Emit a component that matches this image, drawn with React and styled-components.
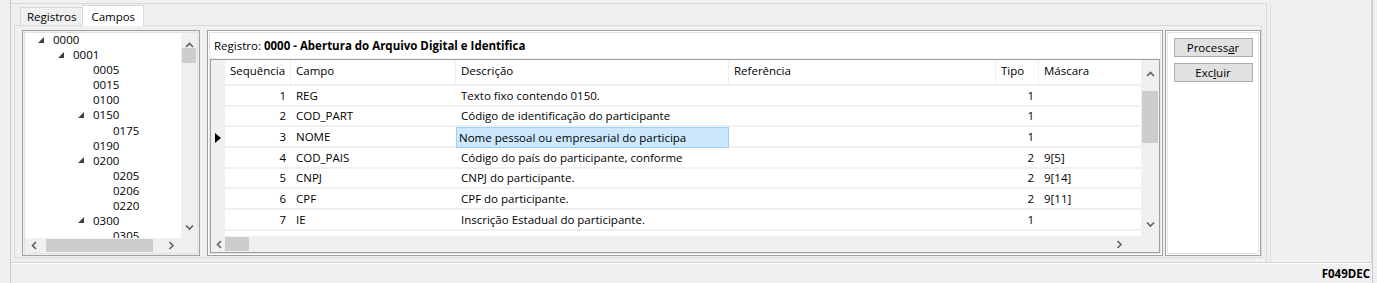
import React from 'react'
import styled, { createGlobalStyle } from 'styled-components'

const Global = createGlobalStyle`
    html, body { margin: 0; padding: 0; background: #f0f0f0; }
    body { font-family: "Open Sans", "Noto Sans", sans-serif; font-size: 11px; color: #000; }
`

const Window = styled.div`
    width: 1377px;
    height: 283px;
    display: flex;
    background: #f0f0f0;
    overflow: hidden;
`
const Gutter = styled.div`
    width: 10px;
    border-right: 1px solid #c8c8c8;
`
const Frame = styled.div`
    width: 1361px;
    display: flex;
    flex-direction: column;
    border-right: 1px solid #c8c8c8;
`
const Top = styled.div`
    height: 262px;
    display: flex;
    border-bottom: 1px solid #d4d4d4;
`
const Main = styled.div`
    width: 1252px;
    display: flex;
    flex-direction: column;
    border-top: 1px solid #dadada;
    margin-top: 3px;
    padding: 1px 0 0 3px;
    border-right: 1px solid #d9d9d9;
`
const Side = styled.div`
    flex: 1;
    margin-left: 3px;
    border-left: 1px solid #e3e3e3;
    border-right: 1px solid #d9d9d9;
`
const TabRow = styled.div`
    display: flex;
    align-items: flex-end;
    height: 20px;
    padding-left: 6px;
`
const Tab = styled.div`
    height: ${p => p.$active ? '20px' : '17px'};
    padding: 0 ${p => p.$active ? '8px' : '6px'};
    margin-left: ${p => p.$active ? '-1px' : '0'};
    display: flex;
    align-items: center;
    border: 1px solid #d9d9d9;
    border-bottom: none;
    background: ${p => p.$active ? '#fff' : '#f0f0f0'};
    font-size: 11.5px;
    position: relative;
    z-index: ${p => p.$active ? 1 : 0};
    margin-bottom: ${p => p.$active ? '-1px' : '0'};
`
const TabBody = styled.div`
    width: 1248px;
    height: 233px;
    border: 1px solid #d9d9d9;
    background: #f0f0f0;
    box-sizing: border-box;
    display: flex;
    padding: 4px 0 0 7px;
`
const TreeBox = styled.div`
    width: 178px;
    height: 226px;
    box-sizing: border-box;
    border: 1px solid #a0a0a0;
    outline: 1px solid #e3e3e3;
    outline-offset: -3px;
    padding: 2px;
    display: grid;
    grid-template-columns: 1fr 16px;
    grid-template-rows: 1fr 15px;
    background: #f0f0f0;
`
const TreeList = styled.div`
    background: #fff;
    overflow: hidden;
    padding-top: 0;
`
const TreeItem = styled.div`
    height: 15.08px;
    line-height: 15px;
    display: flex;
    align-items: center;
    padding-left: ${p => 13 + p.$level * 20}px;
    font-size: 11.5px;
    white-space: nowrap;
    &:first-child { margin-top: -1px; }
`
const Expander = styled.span`
    width: 14px;
    display: inline-flex;
    align-items: center;
    margin-right: 1px;
`
const VBar = styled.div`
    background: #f0f0f0;
    display: flex;
    flex-direction: column;
    align-items: center;
    justify-content: space-between;
    position: relative;
`
const HBar = styled.div`
    background: #f0f0f0;
    display: flex;
    align-items: center;
    justify-content: space-between;
    position: relative;
    padding: 0 6px;
`
const Thumb = styled.div`
    position: absolute;
    background: #cdcdcd;
`
const Corner = styled.div`
    background: #f0f0f0;
`
const GridPanel = styled.div`
    width: 956px;
    height: 226px;
    margin-left: 7px;
    box-sizing: border-box;
    border: 1px solid #a0a0a0;
    outline: 1px solid #e3e3e3;
    outline-offset: -3px;
    padding: 2px;
    display: flex;
    flex-direction: column;
    background: #fff;
`
const Title = styled.div`
    height: 25px;
    display: flex;
    align-items: center;
    padding-left: 4px;
    font-size: 11.5px;
    border-bottom: 1px solid #f0f0f0;
    b { font-weight: 700; margin-left: 3px; }
`
const Grid = styled.div`
    flex: 1;
    border: 1px solid #a0a0a0;
    display: grid;
    grid-template-columns: 1fr 18px;
    grid-template-rows: 1fr 16px;
    overflow: hidden;
`
const Table = styled.div`
    display: flex;
    flex-direction: column;
    overflow: hidden;
    background: #fff;
`
const cols = '14px 66px 165px 273px 267px 43px 105px'
const HeadRow = styled.div`
    display: grid;
    grid-template-columns: ${cols};
    height: 26px;
    flex-shrink: 0;
`
const HeadCell = styled.div`
    display: flex;
    align-items: center;
    padding: 0 0 4px 5px;
    border-right: 1px solid #f0f0f0;
    border-bottom: 2px solid #f0f0f0;
    font-size: 11.5px;
    background: ${p => p.$gray ? '#f0f0f0' : '#fff'};
`
const Row = styled.div`
    display: grid;
    grid-template-columns: ${cols};
    height: 20.67px;
    flex-shrink: 0;
`
const Cell = styled.div`
    display: flex;
    align-items: center;
    box-sizing: border-box;
    padding: 0 5px;
    font-size: 11.5px;
    white-space: nowrap;
    overflow: hidden;
    border-bottom: 2px solid #f0f0f0;
    justify-content: ${p => p.$right ? 'flex-end' : 'flex-start'};
    background: ${p => p.$sel ? '#cce8ff' : '#fff'};
    ${p => p.$sel && 'border: 1px solid #99d1ff; padding-left: 2px;'}
`
const Indicator = styled.div`
    background: #f0f0f0;
    display: flex;
    align-items: center;
    justify-content: center;
`
const Filler = styled.div`
    flex: 1;
    display: grid;
    grid-template-columns: 14px 1fr;
    > div:first-child { background: #f0f0f0; }
`
const ButtonPanel = styled.div`
    width: 96px;
    height: 226px;
    margin-left: 2px;
    box-sizing: border-box;
    border: 1px solid #a0a0a0;
    outline: 1px solid #e3e3e3;
    outline-offset: -3px;
    background: #fff;
    display: flex;
    flex-direction: column;
    align-items: center;
    gap: 6px;
    padding-top: 7px;
`
const Button = styled.button`
    width: 79px;
    height: 19px;
    border: 1px solid #adadad;
    background: #e1e1e1;
    font-family: inherit;
    font-size: 11.5px;
    padding: 0;
    color: #000;
    u { text-decoration: underline; }
`
const StatusBar = styled.div`
    flex: 1;
    display: flex;
    align-items: center;
    justify-content: flex-end;
    padding-right: 2px;
    font-weight: 700;
    font-size: 11.5px;
    border-top: 1px solid #fff;
`

const Chevron = ({ dir }) => {
    const pts = {
        up: '1,5 4.5,1.5 8,5',
        down: '1,1.5 4.5,5 8,1.5',
        left: '5,1 1.5,4.5 5,8',
        right: '1.5,1 5,4.5 1.5,8',
    }[dir]
    const vertical = dir === 'up' || dir === 'down'
    return (
        <svg width={vertical ? 9 : 7} height={vertical ? 7 : 9} viewBox={vertical ? '0 0 9 7' : '0 0 7 9'}>
            <polyline points={pts} fill="none" stroke="#606060" strokeWidth="1.6" />
        </svg>
    )
}

const ExpandIcon = () => (
    <svg width="6" height="6" viewBox="0 0 6 6">
        <polygon points="6,0 6,6 0,6" fill="#404040" />
    </svg>
)

const tree = [
    { id: '0000', level: 0, open: true },
    { id: '0001', level: 1, open: true },
    { id: '0005', level: 2 },
    { id: '0015', level: 2 },
    { id: '0100', level: 2 },
    { id: '0150', level: 2, open: true },
    { id: '0175', level: 3 },
    { id: '0190', level: 2 },
    { id: '0200', level: 2, open: true },
    { id: '0205', level: 3 },
    { id: '0206', level: 3 },
    { id: '0220', level: 3 },
    { id: '0300', level: 2, open: true },
    { id: '0305', level: 3 },
]

const rows = [
    ['1', 'REG', 'Texto fixo contendo 0150.', '', '1', ''],
    ['2', 'COD_PART', 'Código de identificação do participante', '', '1', ''],
    ['3', 'NOME', 'Nome pessoal ou empresarial do participa', '', '1', ''],
    ['4', 'COD_PAIS', 'Código do país do participante, conforme', '', '2', '9[5]'],
    ['5', 'CNPJ', 'CNPJ do participante.', '', '2', '9[14]'],
    ['6', 'CPF', 'CPF do participante.', '', '2', '9[11]'],
    ['7', 'IE', 'Inscrição Estadual do participante.', '', '1', ''],
]

const App = () => {
    return (
        <Window>
            <Global />
            <Gutter />
            <Frame>
                <Top>
                    <Main>
                        <TabRow>
                            <Tab>Registros</Tab>
                            <Tab $active>Campos</Tab>
                        </TabRow>
                        <TabBody>
                            <TreeBox>
                                <TreeList>
                                    {tree.map(t => (
                                        <TreeItem key={t.id} $level={t.level}>
                                            <Expander>{t.open && <ExpandIcon />}</Expander>
                                            {t.id}
                                        </TreeItem>
                                    ))}
                                </TreeList>
                                <VBar>
                                    <span style={{ marginTop: 4 }}><Chevron dir="up" /></span>
                                    <Thumb style={{ left: 1, right: 1, top: 15, height: 15 }} />
                                    <span style={{ marginBottom: 4 }}><Chevron dir="down" /></span>
                                </VBar>
                                <HBar>
                                    <Chevron dir="left" />
                                    <Thumb style={{ left: 21, width: 107, top: 1, bottom: 1 }} />
                                    <Chevron dir="right" />
                                </HBar>
                                <Corner />
                            </TreeBox>
                            <GridPanel>
                                <Title>Registro: <b>0000 - Abertura do Arquivo Digital e Identifica</b></Title>
                                <Grid>
                                    <Table>
                                        <HeadRow>
                                            <HeadCell $gray />
                                            <HeadCell>Sequência</HeadCell>
                                            <HeadCell>Campo</HeadCell>
                                            <HeadCell>Descrição</HeadCell>
                                            <HeadCell>Referência</HeadCell>
                                            <HeadCell>Tipo</HeadCell>
                                            <HeadCell>Máscara</HeadCell>
                                        </HeadRow>
                                        {rows.map((r, i) => (
                                            <Row key={r[0]}>
                                                <Indicator>
                                                    {i === 2 && (
                                                        <svg width="6" height="10" viewBox="0 0 6 10">
                                                            <polygon points="0,0 6,5 0,10" fill="#000" />
                                                        </svg>
                                                    )}
                                                </Indicator>
                                                <Cell $right>{r[0]}</Cell>
                                                <Cell>{r[1]}</Cell>
                                                <Cell $sel={i === 2}>{r[2]}</Cell>
                                                <Cell>{r[3]}</Cell>
                                                <Cell $right>{r[4]}</Cell>
                                                <Cell>{r[5]}</Cell>
                                            </Row>
                                        ))}
                                        <Filler><div /><div /></Filler>
                                    </Table>
                                    <VBar>
                                        <span style={{ marginTop: 6 }}><Chevron dir="up" /></span>
                                        <Thumb style={{ left: 1, right: 1, top: 31, height: 52 }} />
                                        <span style={{ marginBottom: 5 }}><Chevron dir="down" /></span>
                                    </VBar>
                                    <HBar style={{ padding: '0 18px 0 5px' }}>
                                        <Chevron dir="left" />
                                        <Thumb style={{ left: 14, width: 24, top: 1, bottom: 1 }} />
                                        <Chevron dir="right" />
                                    </HBar>
                                    <Corner />
                                </Grid>
                            </GridPanel>
                            <ButtonPanel>
                                <Button>Process<u>a</u>r</Button>
                                <Button>Exc<u>l</u>uir</Button>
                            </ButtonPanel>
                        </TabBody>
                    </Main>
                    <Side />
                </Top>
                <StatusBar>F049DEC</StatusBar>
            </Frame>
        </Window>
    )
}

export default App
